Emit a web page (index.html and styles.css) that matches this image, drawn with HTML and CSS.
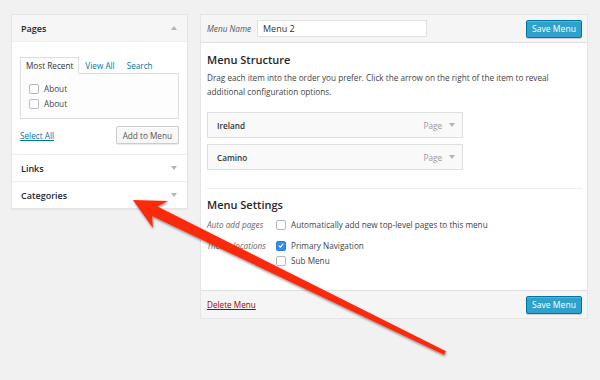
FILE: index.html
```html
<!DOCTYPE html>
<html>
<head>
<meta charset="utf-8">
<link rel="stylesheet" href="styles.css">
</head>
<body>
<div class="page">
  <div class="side">
    <div class="acc-title open"><span>Pages</span><span class="tri up"></span></div>
    <div class="acc-body">
      <div class="tabs">
        <span class="tab active">Most Recent</span>
        <span class="tab">View All</span>
        <span class="tab">Search</span>
      </div>
      <div class="tab-panel">
        <label class="row"><span class="cb"></span>About</label>
        <label class="row"><span class="cb"></span>About</label>
      </div>
      <div class="actions">
        <a class="select-all">Select All</a>
        <span class="btn">Add to Menu</span>
      </div>
    </div>
    <div class="acc-title"><span>Links</span><span class="tri down"></span></div>
    <div class="acc-title last"><span>Categories</span><span class="tri down"></span></div>
  </div>

  <div class="main">
    <div class="main-head">
      <span class="name-label">Menu Name</span>
      <span class="name-input">Menu 2</span>
      <span class="btn primary">Save Menu</span>
    </div>
    <div class="main-body">
      <h3 class="title">Menu Structure</h3>
      <p class="desc">Drag each item into the order you prefer. Click the arrow on the right of the item to reveal additional configuration options.</p>
      <div class="item"><span class="item-name">Ireland</span><span class="item-type">Page</span><span class="tri down"></span></div>
      <div class="item"><span class="item-name">Camino</span><span class="item-type">Page</span><span class="tri down"></span></div>
      <div class="divider"></div>
      <h3 class="title settings">Menu Settings</h3>
      <div class="set-grid">
        <span class="set-label">Auto add pages</span>
        <div class="set-opts"><label class="row"><span class="cb"></span>Automatically add new top-level pages to this menu</label></div>
        <span class="set-label gap">Theme locations</span>
        <div class="set-opts gap">
          <label class="row"><span class="cb checked"><svg viewBox="0 0 10 10" width="9" height="9"><path d="M2.3 5.2 L4.2 7.1 L7.8 2.6" fill="none" stroke="#fff" stroke-width="1.3"/></svg></span>Primary Navigation</label>
          <label class="row"><span class="cb"></span>Sub Menu</label>
        </div>
      </div>
    </div>
    <div class="main-foot">
      <a class="delete">Delete Menu</a>
      <span class="btn primary">Save Menu</span>
    </div>
  </div>
</div>
<svg class="arrow" width="600" height="380" viewBox="0 0 600 380">
  <defs>
    <filter id="sh" x="-10%" y="-10%" width="120%" height="130%">
      <feDropShadow dx="0.5" dy="1.5" stdDeviation="1.2" flood-color="#000" flood-opacity="0.45"/>
    </filter>
  </defs>
  <polygon filter="url(#sh)" fill="#fb2a10" points="133,200 168,201 157.5,206.5 446,351.3 444,354.8 152,216 153,228"/>
</svg>
</body>
</html>
```

FILE: styles.css
```css
body {
  margin: 0;
  background: #f1f1f1;
  font-family: "Open Sans", "Liberation Sans", sans-serif;
  font-size: 8.2px;
  color: #444;
}

.page {
  display: flex;
  align-items: flex-start;
  gap: 12px;
  padding: 14px 0 0 11px;
  white-space: nowrap;
}

.side {
  width: 177px;
  box-sizing: border-box;
  background: #fff;
  border: 1px solid #e5e5e5;
  box-shadow: 0 1px 1px rgba(0, 0, 0, 0.04);
}

.acc-title {
  height: 26px;
  display: flex;
  align-items: center;
  justify-content: space-between;
  padding: 0 10px 0 9px;
  font-size: 9px;
  font-weight: 600;
  color: #23282d;
  border-bottom: 1px solid #eee;
}

.acc-title.open { background: #f6f6f6; }
.acc-title.last { border-bottom: none; }

.tri {
  width: 0;
  height: 0;
  border-left: 3px solid transparent;
  border-right: 3px solid transparent;
}
.tri.up { border-bottom: 4px solid #b4b4b4; }
.tri.down { border-top: 4px solid #b4b4b4; }

.acc-body {
  padding: 15px 8px 10px;
  border-bottom: 1px solid #eee;
}

.tabs {
  display: flex;
  height: 16px;
  align-items: stretch;
}

.tab {
  display: flex;
  align-items: center;
  padding: 0 6px;
  color: #0074a2;
}

.tab.active {
  color: #333;
  padding: 0 5px;
  border: 1px solid #ddd;
  border-bottom: 1px solid #fdfdfd;
  background: #fdfdfd;
  margin-bottom: -1px;
  position: relative;
  z-index: 1;
}

.tab-panel {
  box-sizing: border-box;
  border: 1px solid #ddd;
  background: #fdfdfd;
  height: 46px;
  padding: 7px 8px 0;
}

.row {
  display: flex;
  align-items: center;
  height: 15px;
  color: #444;
}

.cb {
  width: 8px;
  height: 8px;
  border: 1px solid #b4b9be;
  border-radius: 2px;
  background: #fff;
  margin-right: 5px;
  flex: none;
  display: flex;
  align-items: center;
  justify-content: center;
}

.cb.checked {
  background: #2f8ef0;
  border-color: #2a7fd6;
}

.cb svg { display: block; }

.actions {
  display: flex;
  justify-content: space-between;
  align-items: center;
  margin-top: 7px;
}

.select-all {
  color: #0074a2;
  text-decoration: underline;
}

.btn {
  display: flex;
  align-items: center;
  justify-content: center;
  height: 18px;
  box-sizing: border-box;
  padding: 0 6px;
  border: 1px solid #ccc;
  border-radius: 2px;
  background: #f7f7f7;
  color: #555;
  box-shadow: inset 0 1px 0 #fff, 0 1px 0 rgba(0, 0, 0, 0.08);
}

.btn.primary {
  background: #2ea2cc;
  border-color: #0074a2;
  color: #fff;
  width: 56px;
  padding: 0;
  font-size: 8.6px;
  box-shadow: inset 0 1px 0 rgba(120, 200, 230, 0.5), 0 1px 0 rgba(0, 0, 0, 0.15);
}

.main {
  width: 388px;
  box-sizing: border-box;
  background: #fff;
  border: 1px solid #e5e5e5;
  box-shadow: 0 1px 1px rgba(0, 0, 0, 0.04);
}

.main-head {
  height: 27px;
  display: flex;
  align-items: center;
  padding: 0 5px 0 6px;
  background: #f5f5f5;
  border-bottom: 1px solid #dfdfdf;
}

.name-label {
  width: 50px;
  font-style: italic;
  color: #555;
}

.name-input {
  width: 170px;
  height: 17px;
  box-sizing: border-box;
  background: #fff;
  border: 1px solid #e2e2e2;
  display: flex;
  align-items: center;
  padding-left: 5px;
  color: #333;
  font-size: 9px;
}

.main-head .btn.primary { margin-left: auto; }

.main-body {
  padding: 9px 5px 22px 6px;
}

.title {
  margin: 0;
  font-size: 11px;
  line-height: 16px;
  font-weight: 600;
  color: #23282d;
}

.desc {
  margin: 3px 0 13px;
  line-height: 14px;
  width: 350px;
  white-space: normal;
  color: #444;
}

.item {
  width: 256px;
  height: 26px;
  box-sizing: border-box;
  border: 1px solid #dfdfdf;
  background: #f9f9f9;
  display: flex;
  align-items: center;
  padding: 0 7px 0 9px;
  margin-bottom: 6px;
}

.item-name {
  font-weight: 600;
  color: #333;
  flex: 1;
}

.item-type {
  color: #999;
  margin-right: 7px;
}

.divider {
  border-top: 1px solid #eee;
  margin-top: 18px;
}

.title.settings { margin-top: 8px; }

.set-grid {
  display: grid;
  grid-template-columns: 69px 1fr;
  margin-top: 4px;
}

.set-label {
  font-style: italic;
  color: #666;
  line-height: 15px;
}

.gap { margin-top: 6px; }

.main-foot {
  height: 27px;
  display: flex;
  align-items: center;
  justify-content: space-between;
  padding: 0 5px 0 6px;
  background: #f5f5f5;
  border-top: 1px solid #dfdfdf;
}

.delete {
  color: #a00;
  text-decoration: underline;
}

.arrow {
  position: absolute;
  top: 0;
  left: 0;
  pointer-events: none;
}
```
